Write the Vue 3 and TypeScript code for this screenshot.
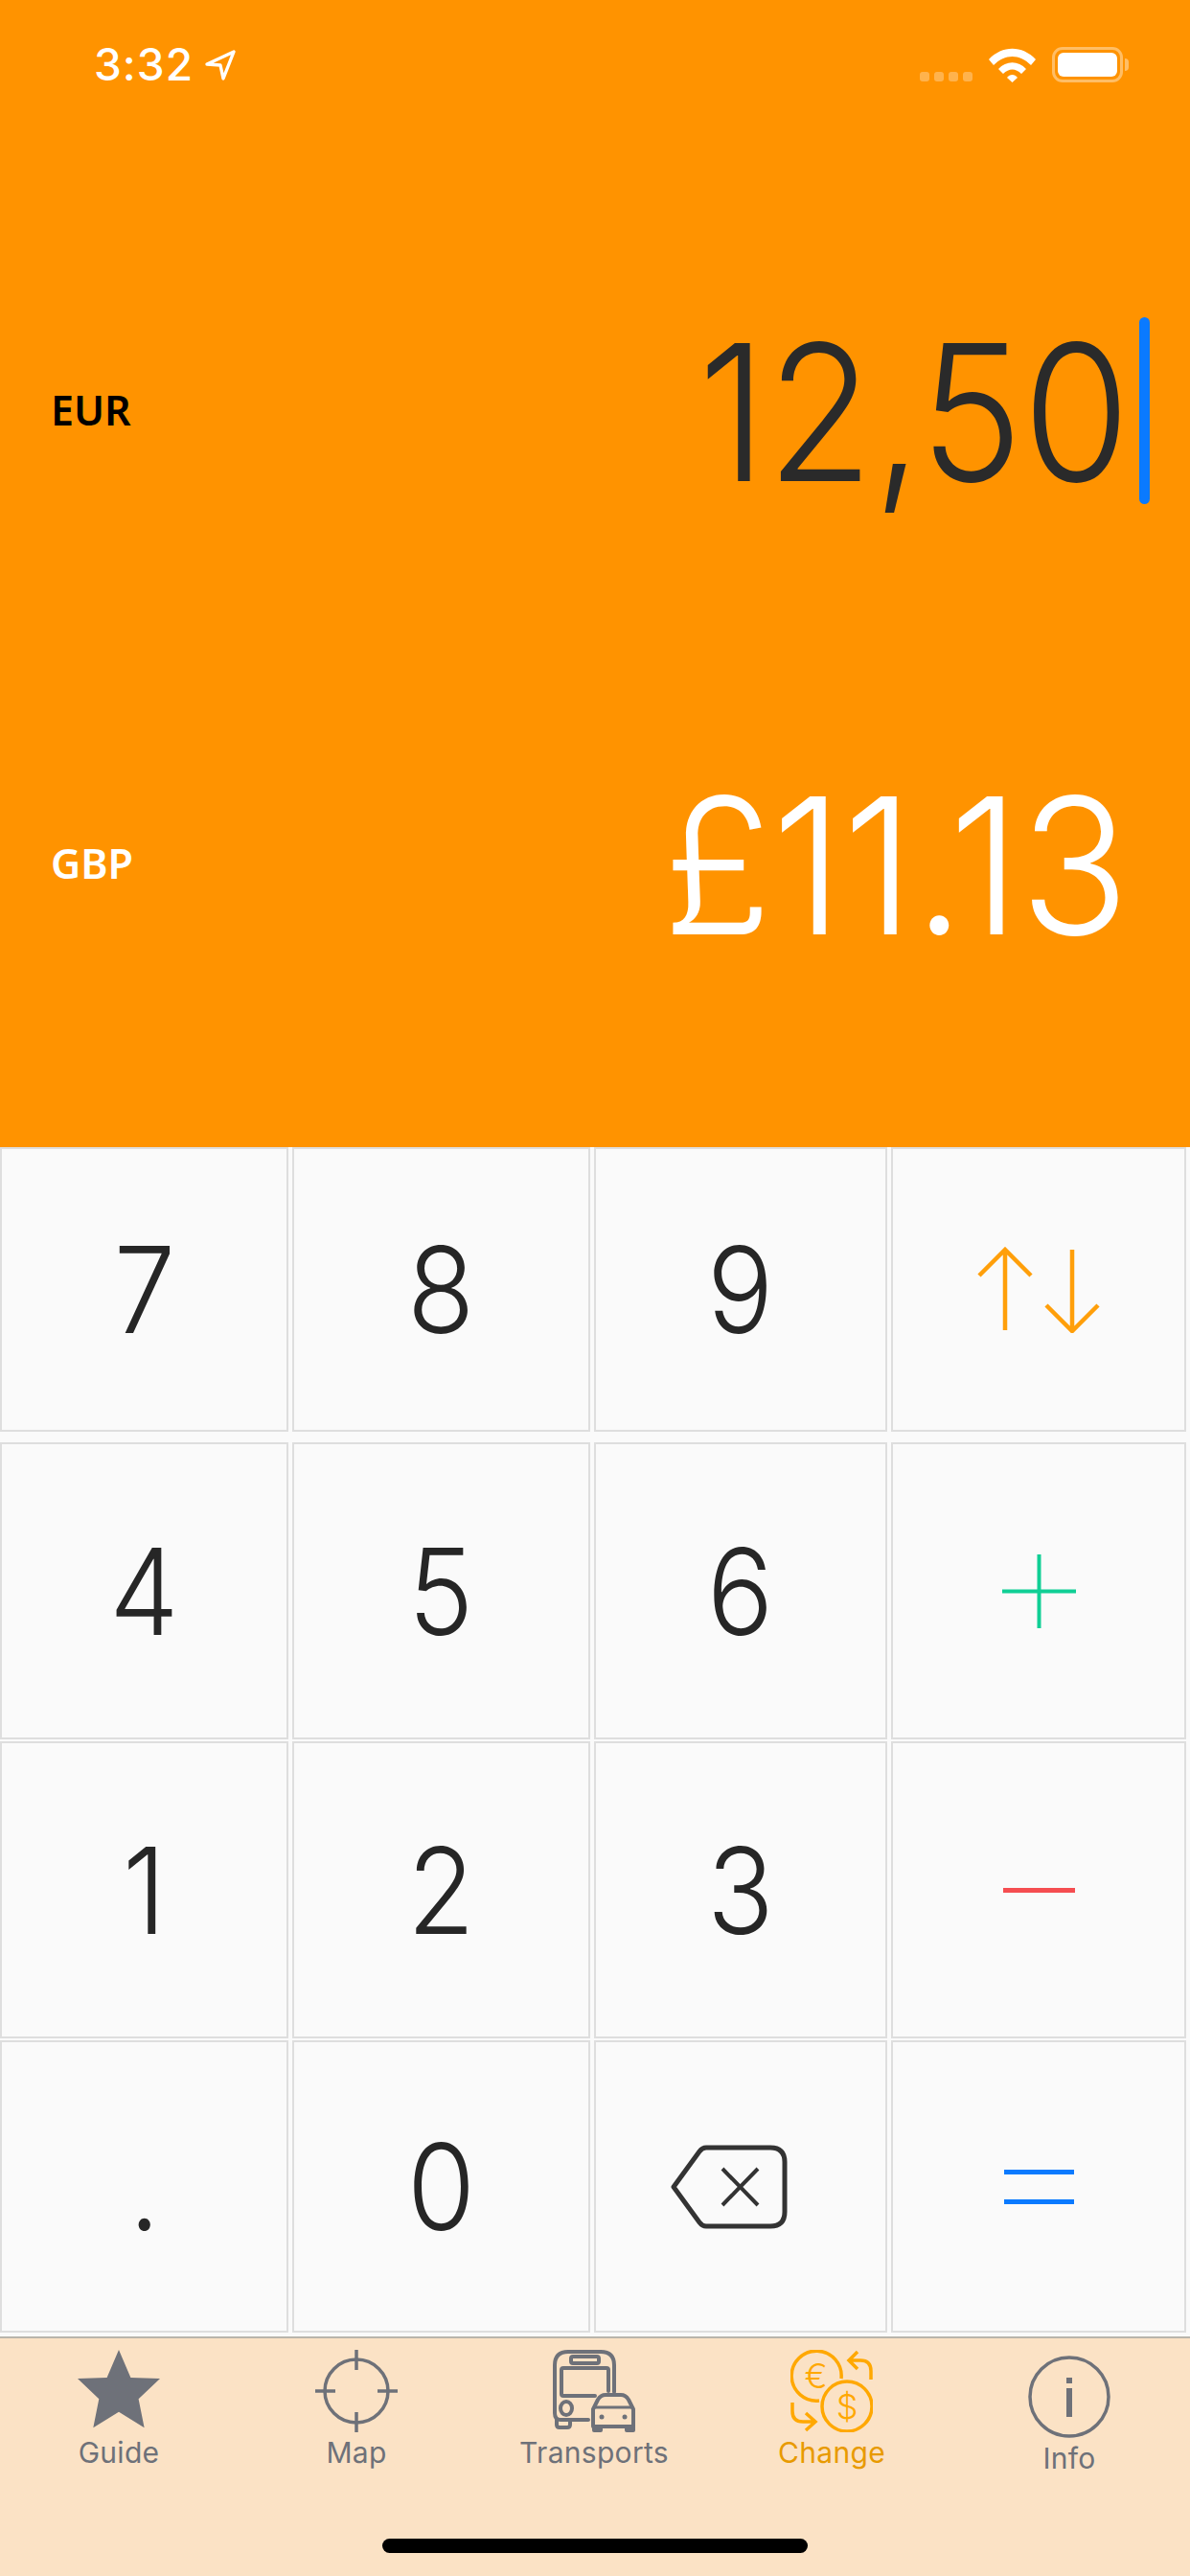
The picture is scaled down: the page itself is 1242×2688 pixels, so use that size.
<script setup lang="ts">
type Key = { label?: string; icon?: string }

const keys: Key[] = [
  { label: '7' }, { label: '8' }, { label: '9' }, { icon: 'swap' },
  { label: '4' }, { label: '5' }, { label: '6' }, { icon: 'plus' },
  { label: '1' }, { label: '2' }, { label: '3' }, { icon: 'minus' },
  { label: '.' }, { label: '0' }, { icon: 'back' }, { icon: 'equals' },
]

const tabs = [
  { name: 'Guide', icon: 'star' },
  { name: 'Map', icon: 'map' },
  { name: 'Transports', icon: 'bus' },
  { name: 'Change', icon: 'change' },
  { name: 'Info', icon: 'info' },
]
</script>

<template>
  <div class="screen">
    <section class="converter">
      <div class="status">
        <div class="time">
          <span>3:32</span>
          <svg class="arrow" viewBox="0 0 32 32" width="32" height="32">
            <path d="M2 15 30 2 19 30 16 16Z" fill="none" stroke="#fff" stroke-width="3.4" stroke-linejoin="round" />
          </svg>
        </div>
        <div class="status-right">
          <div class="dots"><i></i><i></i><i></i><i></i></div>
          <svg viewBox="0 0 49 36" width="49" height="36">
            <path d="M0 12C14-3 35-3 49 12L44 18C32 6 17 6 5 18Z" fill="#fff" />
            <path d="M10 22C18 13 31 13 39 22L34 27C28 21 21 21 15 27Z" fill="#fff" />
            <path d="M19 31C22 27 27 27 30 31L24.500 36Z" fill="#fff" />
          </svg>
          <div class="battery"><b></b></div>
        </div>
      </div>
      <div class="row input-row">
        <span class="code">EUR</span>
        <div class="amount dark">12,50</div>
        <i class="caret"></i>
      </div>
      <div class="row result-row">
        <span class="code light">GBP</span>
        <div class="amount light">£11.13</div>
      </div>
    </section>

    <section class="keypad">
      <button v-for="(key, i) in keys" :key="i" class="key">
        <span v-if="key.label">{{ key.label }}</span>
        <svg v-else-if="key.icon === 'swap'" viewBox="0 0 128 90" width="128" height="90">
          <path d="M29 87V2M2 30 29 3 56 30" fill="none" stroke="#ff9f0a" stroke-width="4.500" />
          <path d="M99 3V88M72 61 99 88 126 61" fill="none" stroke="#ff9f0a" stroke-width="4.500" />
        </svg>
        <svg v-else-if="key.icon === 'plus'" viewBox="0 0 77 77" width="77" height="77">
          <path d="M0 38.500H77M38.500 0V77" stroke="#10cf95" stroke-width="4" />
        </svg>
        <svg v-else-if="key.icon === 'minus'" viewBox="0 0 75 5" width="75" height="5">
          <path d="M0 2.500H75" stroke="#f54d50" stroke-width="5" />
        </svg>
        <svg v-else-if="key.icon === 'back'" class="back" viewBox="0 0 122 88" width="122" height="88">
          <path d="M37 3H104Q119 3 119 18V70Q119 85 104 85H37Q33 85 30 81L3 44 30 7Q33 3 37 3Z" fill="none" stroke="#333" stroke-width="5" stroke-linejoin="round" />
          <path d="M54 25 91 63M91 25 54 63" fill="none" stroke="#333" stroke-width="4" />
        </svg>
        <svg v-else viewBox="0 0 73 36" width="73" height="36">
          <path d="M0 2.500H73M0 33.500H73" stroke="#0a7aff" stroke-width="5" />
        </svg>
      </button>
    </section>

    <nav class="tabs">
      <div v-for="tab in tabs" :key="tab.name" class="tab" :class="[tab.icon]">
        <svg v-if="tab.icon === 'star'" viewBox="0 0 86 86" width="86" height="86">
          <path d="M43 0 55.400 29 86 30 63.600 51.300 69.600 81.300 43 64.700 16.300 81.300 22.300 51.300 0 30 30.600 29Z" fill="#6e7179" />
        </svg>
        <svg v-else-if="tab.icon === 'map'" viewBox="0 0 86 86" width="86" height="86">
          <g fill="none" stroke="#6e7179" stroke-width="3.500">
            <circle cx="43" cy="43" r="33" />
            <path d="M43 0V21M43 65V86M0 43H21M65 43H86" />
          </g>
        </svg>
        <svg v-else-if="tab.icon === 'bus'" viewBox="0 0 86 86" width="86" height="86">
          <g fill="none" stroke="#6e7179" stroke-width="4" stroke-linecap="round" stroke-linejoin="round">
            <path d="M37 73H8Q2 73 2 66V16Q2 2 16 2H50Q64 2 64 16V44" />
            <rect x="19" y="7" width="29" height="7" rx="2" />
            <path d="M58 43V21Q58 19 56 19H11Q9 19 9 21V46Q9 48 11 48H44" />
            <ellipse cx="14" cy="61" rx="6" ry="7" />
            <path d="M4 73V78Q4 81 7 81H15Q18 81 18 78V74" />
            <path d="M42 80H84V62L79 52Q76 47 71 47H55Q50 47 47 52L42 62V80Z" />
            <path d="M44 60H82" stroke-width="3" />
            <path d="M43 80V84H50V80M77 80V84H84V80" />
          </g>
          <circle cx="51" cy="70" r="2.500" fill="#6e7179" />
          <circle cx="75" cy="70" r="2.500" fill="#6e7179" />
        </svg>
        <svg v-else-if="tab.icon === 'change'" viewBox="0 0 86 86" width="86" height="86">
          <g fill="none" stroke="#ffa800" stroke-width="3.500">
            <path d="M53 30A26 26 0 1 0 30 53" />
            <circle cx="59" cy="59" r="26" />
            <path d="M84 31V22Q84 11 73 11H61M70 2 61 11 70 20" />
            <path d="M2 55V64Q2 75 13 75H26M16 66 26 75 16 84" />
          </g>
          <text x="26.500" y="40" class="coin">€</text>
          <text x="59" y="72" class="coin">$</text>
        </svg>
        <svg v-else viewBox="0 0 86 86" width="86" height="86">
          <circle cx="43" cy="43" r="41" fill="none" stroke="#6e7179" stroke-width="3.500" />
          <path d="M43 23V29M43 34V64" stroke="#6e7179" stroke-width="6" />
        </svg>
        <span class="tab-name">{{ tab.name }}</span>
      </div>
      <i class="home-bar"></i>
    </nav>
  </div>
</template>

<style>
html, body { margin: 0; background: #fafafa; }
</style>

<style scoped>
.screen {
  width: 1242px;
  height: 2688px;
  display: flex;
  flex-direction: column;
  background: #fafafa;
  font-family: Inter, "Noto Sans", sans-serif;
  overflow: hidden;
}

.converter {
  height: 1197px;
  background: #ff9300;
  box-sizing: border-box;
  padding-top: 49px;
}

.status {
  height: 37px;
  display: flex;
  justify-content: space-between;
  padding: 0 70px 0 98px;
}

.time {
  display: flex;
  align-items: center;
  gap: 12px;
  color: #fff;
  font-size: 46px;
  font-weight: 500;
  letter-spacing: 1px;
  line-height: 37px;
}

.status-right {
  display: flex;
  align-items: center;
  gap: 17px;
}

.dots {
  display: flex;
  gap: 5px;
  align-self: flex-end;
  margin-bottom: 1px;
}

.dots i {
  width: 10px;
  height: 10px;
  border-radius: 3px;
  background: rgba(255, 255, 255, 0.3);
}

.battery {
  position: relative;
  width: 74px;
  height: 37px;
  box-sizing: border-box;
  padding: 3px;
  border: 3px solid rgba(255, 255, 255, 0.4);
  border-radius: 11px;
}

.battery b {
  display: block;
  height: 100%;
  border-radius: 6px;
  background: #fff;
}

.battery::after {
  content: "";
  position: absolute;
  right: -9px;
  top: 9px;
  width: 4px;
  height: 13px;
  border-radius: 0 4px 4px 0;
  background: rgba(255, 255, 255, 0.4);
}

.row {
  position: relative;
  display: flex;
  align-items: center;
  justify-content: space-between;
  padding: 0 63px 0 53px;
  height: 240px;
}

.input-row { margin-top: 217px; }
.result-row { margin-top: 233px; }

.code {
  margin-top: 8px;
  font-family: "Noto Sans", sans-serif;
  font-size: 43px;
  font-weight: 600;
  color: #000;
}

.code.light { color: #fff; }

.amount {
  margin-top: 14px;
  font-size: 198px;
  font-weight: 300;
  line-height: 240px;
  transform-origin: right center;
}

.amount.dark { color: #2a2a2a; transform: scaleX(0.915); }
.amount.light { color: #fff; transform: scaleX(0.95); }

.caret {
  position: absolute;
  left: 1189px;
  top: 28px;
  width: 11px;
  height: 195px;
  border-radius: 6px;
  background: #0a7aff;
}

.keypad {
  display: grid;
  grid-template-columns: 301px 311px 306px 308px;
  grid-template-rows: 306px 310px 310px 305px;
  column-gap: 4px;
  row-gap: 2px;
  height: 1241px;
}

.key {
  display: flex;
  align-items: center;
  justify-content: center;
  padding: 0;
  background: #fafafa;
  border: 2px solid #dedede;
  color: #262626;
  font-family: Inter, sans-serif;
  font-size: 125px;
  font-weight: 300;
}

.key span {
  display: inline-block;
  transform: scaleX(0.92);
}

.key:nth-child(-n + 4) { margin-bottom: 9px; }

.key .back { margin-right: 24px; }

.tabs {
  position: relative;
  flex: 1;
  display: flex;
  border-top: 2px solid #b9b5ac;
  background: #fbe2c5;
}

.tab {
  width: 248px;
  display: flex;
  flex-direction: column;
  align-items: center;
  box-sizing: border-box;
  padding-top: 12px;
  color: #6e7179;
}

.tab svg { display: block; margin-bottom: 3px; }

.tab.info { padding-top: 18px; }

.tab-name {
  font-size: 30px;
  letter-spacing: 0.3px;
  line-height: 36px;
}

.tab.change .tab-name { color: #e89a00; }

.coin {
  font-family: Inter, sans-serif;
  font-size: 36px;
  font-weight: 300;
  fill: #ffa800;
  text-anchor: middle;
}

.home-bar {
  position: absolute;
  left: 399px;
  top: 209px;
  width: 444px;
  height: 15px;
  border-radius: 8px;
  background: #000;
}
</style>
